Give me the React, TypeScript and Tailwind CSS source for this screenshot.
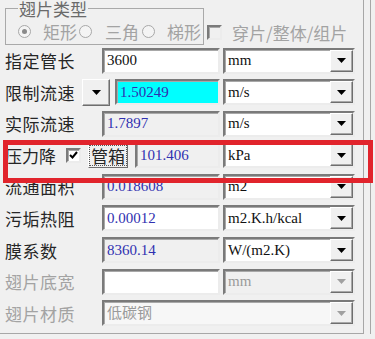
import React from "react";

const cjk = "font-['Noto_Sans_CJK_SC',sans-serif]";
const serif = "font-['Liberation_Serif','Noto_Sans_CJK_SC',serif]";

const sunken =
  "border-2 border-t-[#7a7a7a] border-l-[#7a7a7a] border-r-[#ececec] border-b-[#ececec] shadow-[inset_1px_1px_0_#a8a8a8]";

function Arrow({ disabled }: { disabled?: boolean }) {
  return (
    <svg width="9" height="5" viewBox="0 0 9 5">
      <polygon points="0,0 9,0 4.5,5" fill={disabled ? "#a0a0a0" : "#000"} />
    </svg>
  );
}

function DropButton({ disabled }: { disabled?: boolean }) {
  return (
    <div className="flex h-full w-[23px] items-center justify-center border border-t-white border-l-white border-r-[#6e6e6e] border-b-[#6e6e6e] bg-[#f0f0f0] shadow-[inset_-1px_-1px_0_#a8a8a8]">
      <Arrow disabled={disabled} />
    </div>
  );
}

function Combo({ text, disabled, bg = "bg-white", width = "w-[132px]" }: { text: string; disabled?: boolean; bg?: string; width?: string }) {
  return (
    <div className={`flex h-[26px] items-center ${width} ${bg} ${sunken}`}>
      <span
        className={`flex-1 truncate pl-[3px] text-[15px] leading-none ${serif} ${
          disabled ? "text-[#9a9a9a]" : "text-[#111]"
        }`}
      >
        {text}
      </span>
      <DropButton disabled={disabled} />
    </div>
  );
}

function Edit({ value, width = "w-[118px]", bg = "bg-white", color = "text-[#3030b0]" }: { value: string; width?: string; bg?: string; color?: string }) {
  return (
    <div className={`flex h-[26px] items-center pl-[3px] ${width} ${bg} ${sunken}`}>
      <span className={`text-[15px] leading-none ${serif} ${color}`}>{value}</span>
    </div>
  );
}

function Label({ text, disabled }: { text: string; disabled?: boolean }) {
  return (
    <span className={`flex-1 text-[17px] leading-none tracking-[0.5px] ${cjk} ${disabled ? "text-[#a3a3a3]" : "text-[#262626]"}`}>
      {text}
    </span>
  );
}

function Radio({ checked }: { checked?: boolean }) {
  return (
    <span className="flex h-[13px] w-[13px] shrink-0 items-center justify-center rounded-full border border-[#a8a8a8] bg-[#f4f4f4]">
      {checked && <span className="h-[5px] w-[5px] rounded-full bg-[#8a8a8a]" />}
    </span>
  );
}

export default function App() {
  return (
    <div className="relative h-[339px] w-[375px] overflow-hidden bg-[#f0f0f0]">
      <div className="h-[334px] w-[371px] border-r border-[#a7a7a7]">
        <div className="h-[334px] w-[364px] border-r border-b border-[#a7a7a7]">
          <div className="flex h-[48px] items-start pl-[5px]">
            <fieldset className="h-[45px] w-[199px] min-w-0 shrink-0 border border-[#a9a9a9] pl-[12px]">
              <legend className={`px-[1px] text-[17px] leading-[17px] text-[#6a6a6a] ${cjk}`}>翅片类型</legend>
              <div className={`flex items-center whitespace-nowrap pt-[6px] text-[17px] leading-none text-[#a3a3a3] ${cjk}`}>
                <Radio checked />
                <span className="ml-[12px]">矩形</span>
                <span className="ml-[2px]"><Radio /></span>
                <span className="ml-[13px]">三角</span>
                <span className="ml-[3px]"><Radio /></span>
                <span className="ml-[12px]">梯形</span>
              </div>
            </fieldset>
            <div className={`ml-[3px] mt-[24px] flex items-center whitespace-nowrap text-[17px] leading-none text-[#a3a3a3] ${cjk}`}>
              <span className={`h-[15px] w-[15px] bg-[#f0f0f0] ${sunken}`} />
              <span className="ml-[10px]">穿片/整体/组片</span>
            </div>
          </div>

          <div className="flex w-[355px] flex-col gap-[6.6px] pl-[5px]">
            <div className="flex h-[25px] items-center">
              <Label text="指定管长" />
              <Edit value="3600" color="text-[#111]" />
              <div className="ml-[3px]"><Combo text="mm" /></div>
            </div>

            <div className="flex h-[25px] items-center">
              <Label text="限制流速" />
              <div className="flex h-[27px] w-[28px] items-center justify-center border border-t-white border-l-white border-r-[#6e6e6e] border-b-[#6e6e6e] bg-[#f0f0f0] shadow-[inset_-1px_-1px_0_#a8a8a8]">
                <Arrow />
              </div>
              <div className="ml-[5px]">
                <Edit value="1.50249" width="w-[105px]" bg="bg-[#00ffff]" />
              </div>
              <div className="ml-[3px]"><Combo text="m/s" /></div>
            </div>

            <div className="flex h-[25px] items-center">
              <Label text="实际流速" />
              <Edit value="1.7897" bg="bg-[#f0f0f0]" />
              <div className="ml-[3px]"><Combo text="m/s" /></div>
            </div>

            <div className="flex h-[25px] items-center">
              <span className={`w-[61px] text-[17px] leading-none text-[#262626] ${cjk}`}>压力降</span>
              <span className={`flex h-[15px] w-[15px] items-center justify-center bg-white ${sunken}`}>
                <svg width="9" height="8" viewBox="0 0 9 8">
                  <path d="M1 4 L3.5 6.5 L8 1" stroke="#000" strokeWidth="2" fill="none" />
                </svg>
              </span>
              <div className="ml-[7px] flex h-[25px] w-[40px] items-center justify-center border border-t-white border-l-white border-r-[#6e6e6e] border-b-[#6e6e6e] bg-[#f0f0f0]">
                <span className={`border border-dotted border-[#555] px-[1px] text-[17px] leading-[19px] text-[#262626] ${cjk}`}>管箱</span>
              </div>
              <div className="ml-[7px]">
                <Edit value="101.406" width="w-[85px]" bg="bg-[#f0f0f0]" />
              </div>
              <div className="ml-[3px]"><Combo text="kPa" /></div>
            </div>

            <div className="flex h-[25px] items-center">
              <Label text="流通面积" />
              <Edit value="0.018608" bg="bg-[#f0f0f0]" />
              <div className="ml-[3px]"><Combo text="m2" /></div>
            </div>

            <div className="flex h-[25px] items-center">
              <Label text="污垢热阻" />
              <Edit value="0.00012" />
              <div className="ml-[3px]"><Combo text="m2.K.h/kcal" /></div>
            </div>

            <div className="flex h-[25px] items-center">
              <Label text="膜系数" />
              <Edit value="8360.14" bg="bg-[#f0f0f0]" />
              <div className="ml-[3px]"><Combo text="W/(m2.K)" /></div>
            </div>

            <div className="flex h-[25px] items-center">
              <Label text="翅片底宽" disabled />
              <Edit value="" />
              <div className="ml-[3px]"><Combo text="mm" disabled bg="bg-[#f0f0f0]" /></div>
            </div>

            <div className="flex h-[25px] items-center">
              <Label text="翅片材质" disabled />
              <Combo text="低碳钢" disabled width="w-[253px]" bg="bg-[#f7f7f7]" />
            </div>
          </div>
        </div>
      </div>
      <div className="pointer-events-none absolute left-[3px] top-[140px] h-[43px] w-[370px] border-[5px] border-[#e1242c]" />
    </div>
  );
}
